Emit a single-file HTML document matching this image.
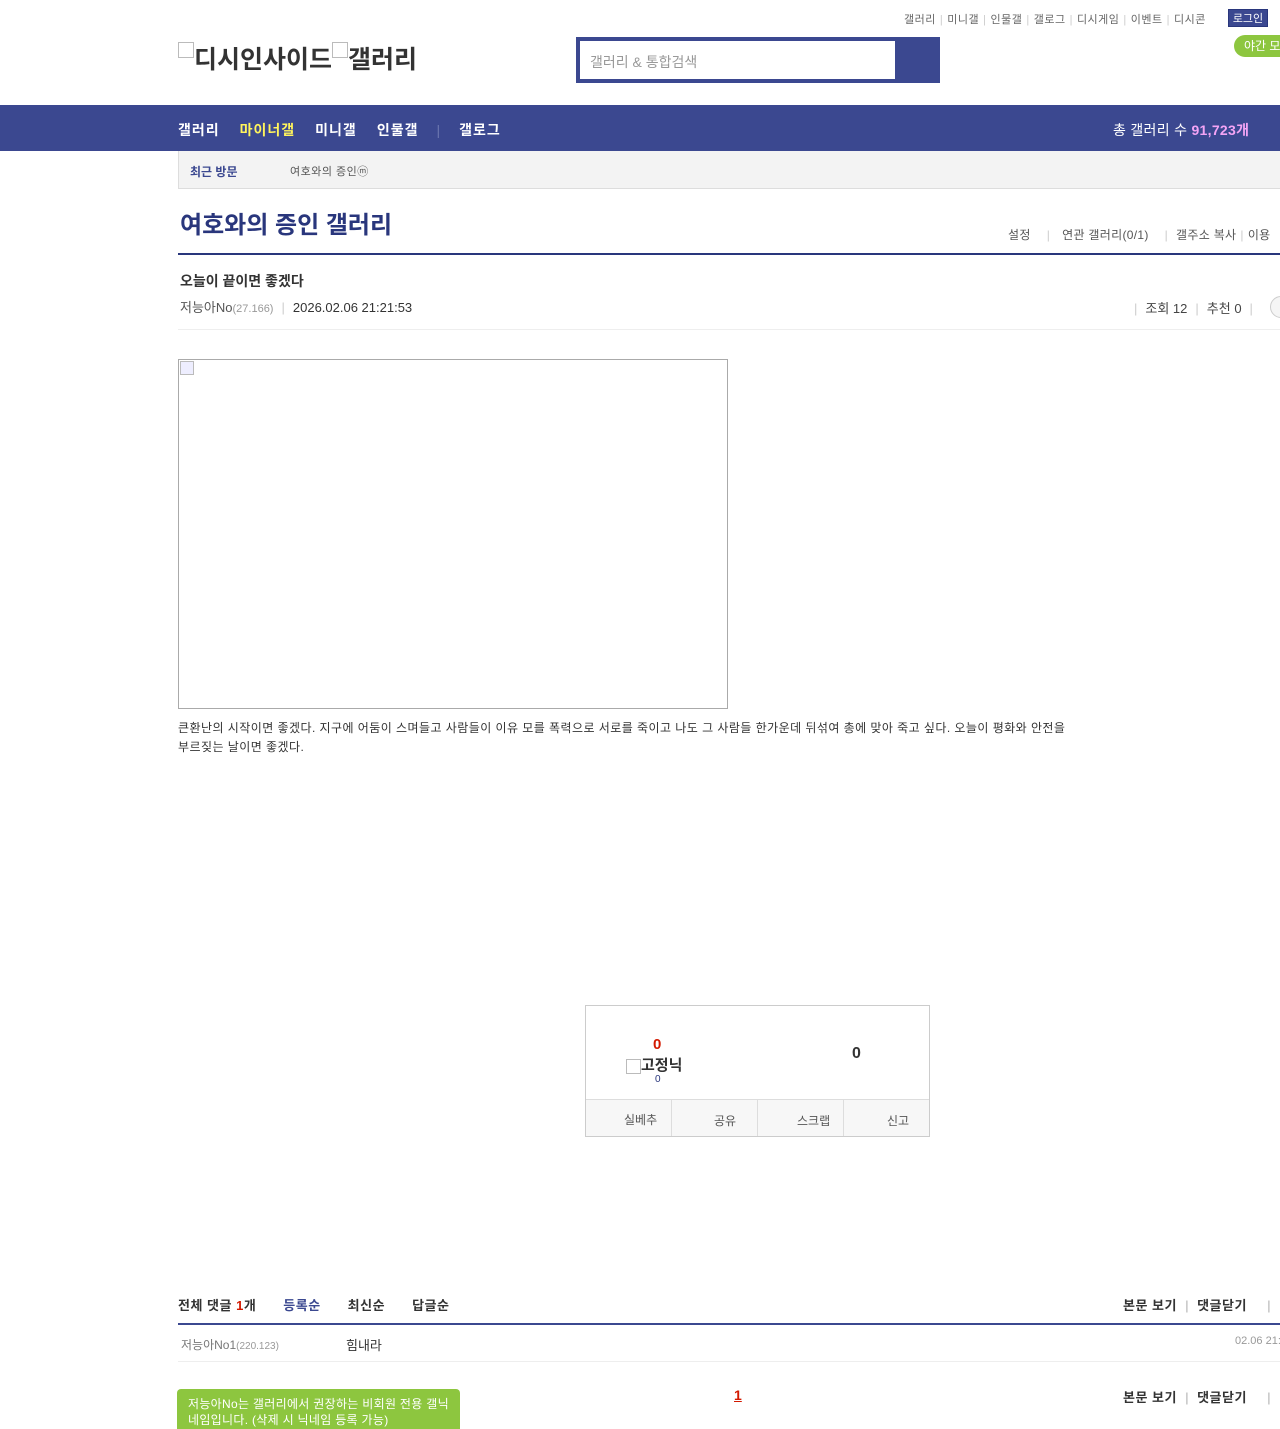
<!DOCTYPE html>
<html><head><meta charset="utf-8"><style>
*{margin:0;padding:0;box-sizing:border-box}
body{width:1280px;height:1429px;overflow:hidden;position:relative;background:#fff;font-family:"Liberation Sans","Noto Sans CJK KR",sans-serif;color:#333}
.a{position:absolute;white-space:nowrap}
.sep{color:#ccc;margin:0 4px}
</style></head><body>
<div class="a" style="left:904px;top:11px;font-size:11px;color:#666;letter-spacing:0.5px">갤러리<span class="sep">|</span>미니갤<span class="sep">|</span>인물갤<span class="sep">|</span>갤로그<span class="sep">|</span>디시게임<span class="sep">|</span>이벤트<span class="sep">|</span>디시콘</div>
<div class="a" style="left:1228px;top:9px;width:40px;height:18px;background:#3b4890;color:#fff;font-size:11px;line-height:18px;text-align:center;border:1px solid #29367c">로그인</div>
<div class="a" style="left:1234px;top:35px;width:60px;height:22px;background:#8dc63f;border-radius:11px;color:#fff;font-size:12px;line-height:22px;padding-left:10px">야간 모드</div>
<div class="a" style="left:178px;top:40px;font-size:25px;font-weight:bold;color:#333"><span style="display:inline-block;width:16px;height:16px;border:1px solid #bbb;vertical-align:top;margin-top:2px"></span>디시인사이드<span style="display:inline-block;width:16px;height:16px;border:1px solid #bbb;vertical-align:top;margin-top:2px"></span>갤러리</div>
<div class="a" style="left:576px;top:37px;width:364px;height:46px;background:#3b4890"></div>
<div class="a" style="left:580px;top:41px;width:315px;height:38px;background:#fff;font-size:14px;color:#999;padding:11px 10px">갤러리 &amp; 통합검색</div>
<div class="a" style="left:0;top:105px;width:1280px;height:46px;background:#3b4890"></div>
<div class="a" style="left:178px;top:120px;font-size:14px;font-weight:bold;color:#fff;letter-spacing:1px">갤러리<span style="color:#fff45c;margin-left:20px">마이너갤</span><span style="margin-left:20px">미니갤</span><span style="margin-left:20px">인물갤</span><span style="color:#6b76b0;margin:0 18px;font-weight:normal">|</span>갤로그</div>
<div class="a" style="left:1113px;top:120px;font-size:14px;color:#fff;letter-spacing:0.3px">총 갤러리 수 <b style="color:#f4a4f5">91,723개</b></div>
<div class="a" style="left:178px;top:151px;width:1102px;height:38px;background:#f3f3f3;border-bottom:1px solid #ddd;border-left:1px solid #ddd"></div>
<div class="a" style="left:190px;top:163px;font-size:12px;font-weight:bold;color:#3b4890">최근 방문</div>
<div class="a" style="left:290px;top:163px;font-size:11px;color:#555;letter-spacing:0.5px">여호와의 증인ⓜ</div>
<div class="a" style="left:180px;top:205px;font-size:24px;font-weight:bold;color:#29367c">여호와의 증인 갤러리</div>
<div class="a" style="left:1008px;top:226px;font-size:12px;color:#555;letter-spacing:0.3px">설정<span class="sep" style="margin:0 12px 0 16px">|</span>연관 갤러리(0/1)<span class="sep" style="margin:0 8px 0 16px">|</span>갤주소 복사<span class="sep">|</span>이용</div>
<div class="a" style="left:178px;top:253px;width:1102px;height:2px;background:#29367c"></div>
<div class="a" style="left:180px;top:271px;font-size:14px;font-weight:bold;color:#333">오늘이 끝이면 좋겠다</div>
<div class="a" style="left:180px;top:297px;font-size:13px;color:#555">저능아No<span style="font-size:11px;color:#999">(27.166)</span><span class="sep" style="margin:0 8px">|</span><span style="color:#333">2026.02.06 21:21:53</span></div>
<div class="a" style="left:1134px;top:298px;font-size:13px;color:#444"><span class="sep" style="margin:0 8px 0 0">|</span>조회 12<span class="sep" style="margin:0 8px">|</span>추천 0<span class="sep" style="margin:0 8px">|</span></div>
<div class="a" style="left:1270px;top:296px;width:22px;height:22px;border:1px solid #ccc;border-radius:11px;background:#f5f5f5"></div>
<div class="a" style="left:178px;top:329px;width:1102px;height:1px;background:#eee"></div>
<div class="a" style="left:178px;top:359px;width:550px;height:350px;border:1px solid #aaa"></div>
<div class="a" style="left:180px;top:361px;width:14px;height:14px;border:1px solid #bbb;background:#eef"></div>
<div class="a" style="left:178px;top:719px;width:892px;font-size:12px;line-height:19px;color:#333;white-space:normal;letter-spacing:0.45px">큰환난의 시작이면 좋겠다. 지구에 어둠이 스며들고 사람들이 이유 모를 폭력으로 서로를 죽이고 나도 그 사람들 한가운데 뒤섞여 총에 맞아 죽고 싶다. 오늘이 평화와 안전을 부르짖는 날이면 좋겠다.</div>
<div class="a" style="left:585px;top:1005px;width:345px;height:132px;border:1px solid #ccc"></div>
<div class="a" style="left:586px;top:1099px;width:343px;height:37px;background:#f7f7f7;border-top:1px solid #ddd"></div>
<div class="a" style="left:671px;top:1100px;width:1px;height:36px;background:#ddd"></div>
<div class="a" style="left:757px;top:1100px;width:1px;height:36px;background:#ddd"></div>
<div class="a" style="left:843px;top:1100px;width:1px;height:36px;background:#ddd"></div>
<div class="a" style="left:624px;top:1111px;font-size:12px;color:#555">실베추</div>
<div class="a" style="left:714px;top:1112px;font-size:12px;color:#555">공유</div>
<div class="a" style="left:797px;top:1112px;font-size:12px;color:#555">스크랩</div>
<div class="a" style="left:887px;top:1112px;font-size:12px;color:#555">신고</div>
<div class="a" style="left:653px;top:1036px;font-size:15px;font-weight:bold;color:#d31900">0</div>
<div class="a" style="left:626px;top:1054px;font-size:15px;font-weight:bold;color:#333"><span style="display:inline-block;width:15px;height:15px;border:1px solid #bbb;vertical-align:middle"></span>고정닉</div>
<div class="a" style="left:655px;top:1074px;font-size:10px;color:#29367c">0</div>
<div class="a" style="left:852px;top:1045px;font-size:16px;font-weight:bold;color:#333">0</div>
<div class="a" style="left:178px;top:1295px;font-size:13px;font-weight:bold;color:#333;letter-spacing:0.5px">전체 댓글 <span style="color:#d31900">1</span>개<span style="color:#3b4890;margin-left:27px">등록순</span><span style="margin-left:27px">최신순</span><span style="margin-left:27px">답글순</span></div>
<div class="a" style="left:1123px;top:1295px;font-size:13px;font-weight:bold;color:#333;letter-spacing:0.5px">본문 보기<span class="sep" style="margin:0 8px">|</span>댓글닫기<span class="sep" style="margin:0 0 0 20px">|</span></div>
<div class="a" style="left:178px;top:1323px;width:1102px;height:2px;background:#3b4890"></div>
<div class="a" style="left:181px;top:1336px;font-size:12px;color:#777">저능아No1<span style="font-size:10px;color:#999">(220.123)</span></div>
<div class="a" style="left:346px;top:1335px;font-size:13px;color:#333">힘내라</div>
<div class="a" style="left:1235px;top:1335px;font-size:11px;color:#999">02.06 21:</div>
<div class="a" style="left:178px;top:1361px;width:1102px;height:1px;background:#eee"></div>
<div class="a" style="left:177px;top:1389px;width:283px;height:40px;background:#8dc63f;border-radius:4px 4px 0 0;color:#fff;font-size:12px;line-height:16px;padding:7px 11px;white-space:normal;letter-spacing:0.3px">저능아No는 갤러리에서 권장하는 비회원 전용 갤닉네임입니다. (삭제 시 닉네임 등록 가능)</div>
<div class="a" style="left:734px;top:1387px;font-size:14px;font-weight:bold;color:#d31900;text-decoration:underline">1</div>
<div class="a" style="left:1123px;top:1387px;font-size:13px;font-weight:bold;color:#333;letter-spacing:0.5px">본문 보기<span class="sep" style="margin:0 8px">|</span>댓글닫기<span class="sep" style="margin:0 0 0 20px">|</span></div>
</body></html>
